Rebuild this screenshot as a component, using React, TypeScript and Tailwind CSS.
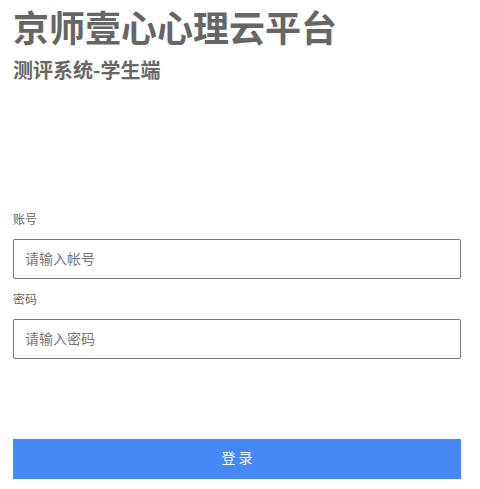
const font = "font-['Noto_Sans_CJK_SC','Noto_Sans',sans-serif]";

function Field({ label, placeholder, type }: { label: string; placeholder: string; type: string }) {
  return (
    <div className="flex flex-col">
      <label className="text-[12px] leading-[20px] text-[#666]">{label}</label>
      <input
        type={type}
        placeholder={placeholder}
        className="mt-[10px] h-[40px] w-full rounded-[2px] border border-[#767676] bg-white px-[11px] pb-[2px] text-[14px] text-[#333] outline-none placeholder:text-[#777]"
      />
    </div>
  );
}

export default function App() {
  return (
    <div className={`${font} min-h-[489px] bg-white`}>
      <div className="ml-[13px] w-[448px] pt-[8px]">
        <h1 className="text-[36px] leading-[36px] font-bold text-[#666]">京师壹心心理云平台</h1>
        <h2 className="mt-[16px] text-[20px] leading-[20px] font-bold text-[#666]">测评系统-学生端</h2>

        <div className="mt-[129px] flex flex-col gap-[10px]">
          <Field label="账号" placeholder="请输入帐号" type="text" />
          <Field label="密码" placeholder="请输入密码" type="password" />
        </div>

        <button className="mt-[80px] h-[40px] w-full bg-[#4688f5] pb-[3px] text-[14px] text-white">登 录</button>
      </div>
    </div>
  );
}
